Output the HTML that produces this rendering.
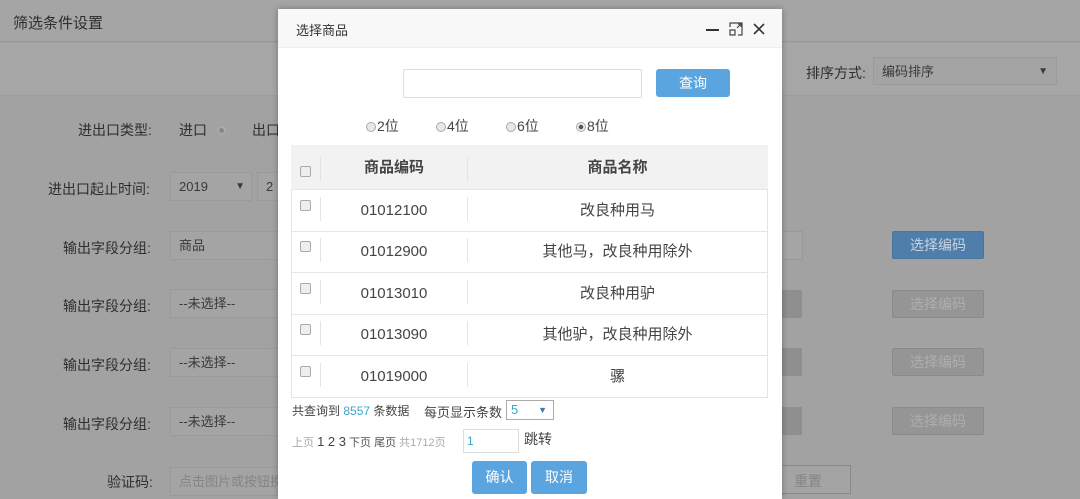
<!DOCTYPE html>
<html><head><meta charset="utf-8"><style>
*{box-sizing:border-box;margin:0;padding:0}
html,body{width:1080px;height:499px;overflow:hidden}
body{background:#a2a2a2;font-family:"Liberation Sans","Noto Sans CJK SC",sans-serif;position:relative;color:#333}
.a{position:absolute;white-space:nowrap}
.bg{color:#2e2e2e;font-size:14px}
.fld{position:absolute;border:1px solid #9a9a9a;background:#a4a4a4;height:29px;font-size:13px;color:#3a3a3a;padding:0 8px;line-height:27px;white-space:nowrap;overflow:hidden}
.btn{position:absolute;width:92px;height:28px;border:1px solid #8a8a8a;background:#959595;color:#aeaeae;font-size:14px;text-align:center;line-height:26px;border-radius:2px}
.dlg{position:absolute;left:278px;top:9px;width:504px;height:490px;background:#fff;box-shadow:0 0 6px rgba(0,0,0,.3)}
.row{position:absolute;left:13px;width:477px;height:42px;line-height:41px;border-bottom:1px solid #e6e6e6;font-size:15px;color:#444}
.cb{position:absolute;left:9px;width:11px;height:11px;border:1px solid #aaa;background:#eee;border-radius:2px}
.sep{position:absolute;top:7px;width:1px;height:24px;background:#e4e4e4}
.c1{position:absolute;left:30px;top:0;width:146px;text-align:center}
.c2{position:absolute;left:176px;top:0;width:301px;text-align:center}
.rad{display:inline-block;width:10px;height:10px;border:1px solid #aaa;border-radius:50%;background:#e8e8e8;margin-right:1px;vertical-align:-1px}
.bb{position:absolute;background:#5aa5df;color:#fff;font-size:14px;text-align:center;border-radius:3px}
</style></head><body>
<div class="a" style="left:0;top:0;width:1080px;height:42px;background:#a5a5a5;border-bottom:1px solid #979797"></div>
<div class="a bg" style="left:13px;top:12px;font-size:15px">筛选条件设置</div>
<div class="a" style="left:0;top:43px;width:1080px;height:53px;background:#a6a6a6;border-bottom:1px solid #9c9c9c"></div>
<div class="a bg" style="left:806px;top:63px">排序方式:</div>
<div class="fld" style="left:873px;top:57px;width:184px;height:28px">编码排序<span style="position:absolute;right:8px;font-size:10px;top:0">▼</span></div>
<div class="a bg" style="left:78px;top:120px">进出口类型:</div>
<div class="a bg" style="left:179px;top:120px">进口 <span style="display:inline-block;width:9px;height:9px;border-radius:50%;background:#888;border:2px solid #aaa;margin-left:6px"></span></div>
<div class="a bg" style="left:252px;top:120px">出口</div>
<div class="a bg" style="left:48px;top:179px">进出口起止时间:</div>
<div class="fld" style="left:170px;top:172px;width:82px">2019<span style="position:absolute;right:6px;font-size:10px;top:0">▼</span></div>
<div class="fld" style="left:257px;top:172px;width:30px">2</div>
<div class="a bg" style="left:63px;top:238px">输出字段分组:</div>
<div class="fld" style="left:170px;top:231px;width:120px">商品</div>
<div class="a bg" style="left:63px;top:296px">输出字段分组:</div>
<div class="fld" style="left:170px;top:289px;width:120px">--未选择--</div>
<div class="a bg" style="left:63px;top:355px">输出字段分组:</div>
<div class="fld" style="left:170px;top:348px;width:120px">--未选择--</div>
<div class="a bg" style="left:63px;top:414px">输出字段分组:</div>
<div class="fld" style="left:170px;top:407px;width:120px">--未选择--</div>
<div class="a bg" style="left:107px;top:472px">验证码:</div>
<div class="fld" style="left:170px;top:467px;width:120px;color:#858585">点击图片或按钮换</div>
<div class="a" style="left:770px;top:231px;width:33px;height:29px;border:1px solid #999;background:#a5a5a5"></div>
<div class="a" style="left:770px;top:290px;width:32px;height:28px;background:#8f8f8f"></div>
<div class="a" style="left:770px;top:348px;width:32px;height:28px;background:#8f8f8f"></div>
<div class="a" style="left:770px;top:407px;width:32px;height:28px;background:#8f8f8f"></div>
<div class="a" style="left:770px;top:465px;width:81px;height:29px;border:1px solid #888;background:#a4a4a4;color:#858585;font-size:14px;padding:5px 0 0 23px">重置</div>
<div class="btn" style="left:892px;top:231px;background:#4f7eaa;border-color:#4a75a0;color:#c8d3df">选择编码</div>
<div class="btn" style="left:892px;top:290px">选择编码</div>
<div class="btn" style="left:892px;top:348px">选择编码</div>
<div class="btn" style="left:892px;top:407px">选择编码</div>

<div class="dlg">
 <div class="a" style="left:0;top:0;width:504px;height:39px;background:#f8f8f8;border-bottom:1px solid #eee"></div>
 <div class="a" style="left:18px;top:11px;font-size:13px;color:#333">选择商品</div>
 <div class="a" style="left:428px;top:20px;width:13px;height:2px;background:#333"></div>
 <svg class="a" style="left:451px;top:13px" width="14" height="14" viewBox="0 0 14 14" fill="none" stroke="#444" stroke-width="1.2"><path d="M1 5V1h12v12H9M1 8h5v5H1z M8 6l4-4M9 2h3v3"/></svg>
 <svg class="a" style="left:475px;top:14px" width="12" height="12" viewBox="0 0 12 12" stroke="#333" stroke-width="1.6"><path d="M1 1l10 10M11 1L1 11"/></svg>
 <div class="a" style="left:125px;top:60px;width:239px;height:29px;border:1px solid #ddd;border-radius:2px"></div>
 <div class="bb" style="left:378px;top:60px;width:74px;height:28px;line-height:28px">查询</div>
 <div class="a" style="left:88px;top:107px;font-size:14px;color:#444"><span class="rad"></span>2位</div>
 <div class="a" style="left:158px;top:107px;font-size:14px;color:#444"><span class="rad"></span>4位</div>
 <div class="a" style="left:228px;top:107px;font-size:14px;color:#444"><span class="rad"></span>6位</div>
 <div class="a" style="left:298px;top:107px;font-size:14px;color:#444"><span class="rad" style="background:radial-gradient(#555 35%,#eee 45%)"></span>8位</div>
 <div class="a" style="left:13px;top:136px;width:477px;height:253px;border:1px solid #e4e4e4"></div>
 <div class="row" style="top:136px;height:45px;line-height:45px;background:#f2f2f2;font-weight:bold"><div class="cb" style="top:21px"></div><div class="sep" style="left:29px;top:12px"></div><div class="c1">商品编码</div><div class="sep" style="left:176px;top:12px"></div><div class="c2">商品名称</div></div>
 <div class="row" style="top:181px"><div class="cb" style="top:10px"></div><div class="sep" style="left:29px"></div><div class="c1">01012100</div><div class="sep" style="left:176px"></div><div class="c2">改良种用马</div></div>
 <div class="row" style="top:222px"><div class="cb" style="top:10px"></div><div class="sep" style="left:29px"></div><div class="c1">01012900</div><div class="sep" style="left:176px"></div><div class="c2">其他马，改良种用除外</div></div>
 <div class="row" style="top:264px"><div class="cb" style="top:10px"></div><div class="sep" style="left:29px"></div><div class="c1">01013010</div><div class="sep" style="left:176px"></div><div class="c2">改良种用驴</div></div>
 <div class="row" style="top:305px"><div class="cb" style="top:10px"></div><div class="sep" style="left:29px"></div><div class="c1">01013090</div><div class="sep" style="left:176px"></div><div class="c2">其他驴，改良种用除外</div></div>
 <div class="row" style="top:347px;border-bottom:none"><div class="cb" style="top:10px"></div><div class="sep" style="left:29px"></div><div class="c1">01019000</div><div class="sep" style="left:176px"></div><div class="c2">骡</div></div>
 <div class="a" style="left:14px;top:393px;font-size:12px;color:#444">共查询到 <span style="color:#3aa7c9">8557</span> 条数据</div>
 <div class="a" style="left:146px;top:393px;font-size:13px;color:#444">每页显示条数</div>
 <div class="a" style="left:228px;top:391px;width:48px;height:20px;border:1px solid #aaa;font-size:13px;color:#3aa7c9;padding:0 4px;line-height:18px">5<span style="position:absolute;right:6px;font-size:9px;top:0;color:#3a7ab8">▼</span></div>
 <div class="a" style="left:14px;top:425px;font-size:11px;color:#aaa">上页 <span style="font-size:13px;color:#444">1 2 3</span> <span style="color:#555">下页 尾页</span> 共1712页</div>
 <div class="a" style="left:185px;top:420px;width:56px;height:24px;border:1px solid #ddd;font-size:12px;color:#3aa7c9;padding:0 3px;line-height:22px">1</div>
 <div class="a" style="left:246px;top:420px;font-size:14px;color:#444">跳转</div>
 <div class="bb" style="left:194px;top:452px;width:55px;height:33px;line-height:33px">确认</div>
 <div class="bb" style="left:253px;top:452px;width:56px;height:33px;line-height:33px">取消</div>
</div>
</body></html>
